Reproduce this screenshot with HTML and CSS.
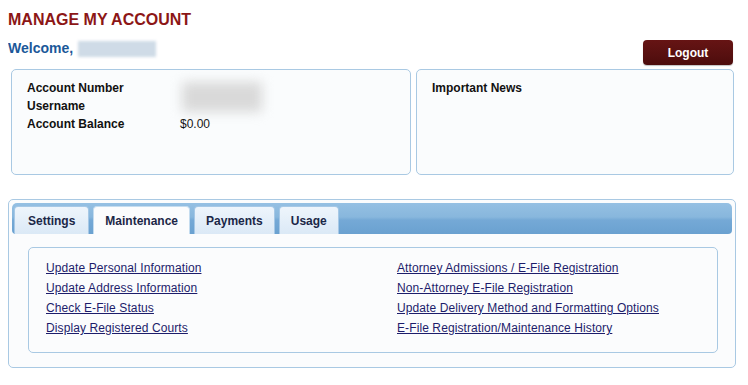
FILE: index.html
```html
<!DOCTYPE html>
<html lang="en">
<head>
  <meta charset="UTF-8">
  <meta name="viewport" content="width=device-width, initial-scale=1.0">
  <title>Manage My Account</title>
  <link rel="stylesheet" href="styles.css">
</head>
<body>
  <main class="page">
    <h1 class="title">MANAGE MY ACCOUNT</h1>
    <div class="top-bar">
      <div class="welcome">Welcome, <span class="name-blur"></span></div>
      <button class="logout">Logout</button>
    </div>
    <div class="panels">
      <section class="panel account">
        <div class="info">
          <div class="label">Account Number</div>
          <div class="value-blur"><span></span></div>
          <div class="label">Username</div>
          <div class="label">Account Balance</div>
          <div class="value">$0.00</div>
        </div>
      </section>
      <section class="panel news">
        <div class="label">Important News</div>
      </section>
    </div>
    <div class="tab-box">
      <nav class="tab-bar">
        <a class="tab">Settings</a>
        <a class="tab active">Maintenance</a>
        <a class="tab">Payments</a>
        <a class="tab">Usage</a>
      </nav>
      <div class="tab-content">
        <div class="links">
          <a href="#">Update Personal Information</a>
          <a href="#">Attorney Admissions / E-File Registration</a>
          <a href="#">Update Address Information</a>
          <a href="#">Non-Attorney E-File Registration</a>
          <a href="#">Check E-File Status</a>
          <a href="#">Update Delivery Method and Formatting Options</a>
          <a href="#">Display Registered Courts</a>
          <a href="#">E-File Registration/Maintenance History</a>
        </div>
      </div>
    </div>
  </main>
</body>
</html>
```

FILE: styles.css
```css
body {
  margin: 8px;
  background-color: #fff;
  font-family: "Liberation Sans", Arial, sans-serif;
  color: #111;
}

.page {
  width: 728px;
}

.title {
  margin: 0;
  padding-top: 2px;
  font-size: 16px;
  line-height: 20px;
  color: #8c1616;
}

.top-bar {
  display: flex;
  justify-content: space-between;
  align-items: flex-start;
  margin-top: 9px;
}

.welcome {
  font-size: 14px;
  font-weight: bold;
  line-height: 18px;
  color: #1b5899;
}

.name-blur {
  display: inline-block;
  width: 78px;
  height: 16px;
  margin-left: 1px;
  vertical-align: -4px;
  background-color: #cfdbe7;
  filter: blur(1.5px);
}

.logout {
  margin: 1px 3px 0 0;
  width: 90px;
  height: 25px;
  padding: 0;
  border: none;
  border-radius: 4px;
  background: linear-gradient(#661414, #571010 60%, #4c0c0c);
  box-shadow: 0 1px 1px rgba(0, 0, 0, 0.25);
  color: #fff;
  font-family: inherit;
  font-size: 12px;
  font-weight: bold;
}

.panels {
  display: flex;
  gap: 5px;
  margin: 4px 2px 0 3px;
}

.panel {
  height: 106px;
  box-sizing: border-box;
  padding: 9px 15px;
  border: 1px solid #a9c9e3;
  border-radius: 5px;
  background-color: #fafcfd;
}

.account {
  width: 400px;
}

.news {
  flex: 1;
}

.label {
  font-size: 12px;
  font-weight: bold;
  line-height: 18px;
}

.info {
  display: grid;
  grid-template-columns: 153px 1fr;
}

.value {
  font-size: 12px;
  line-height: 18px;
}

.value-blur {
  grid-row: span 2;
}

.value-blur span {
  display: block;
  width: 80px;
  height: 30px;
  margin: 3px 0 0 2px;
  background-color: #d9d9d9;
  filter: blur(6px);
}

.tab-box {
  margin-top: 24px;
  border: 1px solid #a9c9e3;
  border-radius: 5px;
  background-color: #fbfcfd;
}

.tab-bar {
  display: flex;
  gap: 4px;
  height: 31px;
  box-sizing: border-box;
  margin: 3px 3px 0;
  padding: 3px 2px 0;
  border-radius: 5px 5px 4px 4px;
  background: linear-gradient(#95c0e3, #88b7dd 45%, #75a9d6 55%, #6aa1d0);
}

.tab {
  padding: 0 11px;
  border: 1px solid #a6c8e6;
  border-bottom: none;
  border-radius: 4px 4px 0 0;
  background: linear-gradient(#eef5fc, #dbe9f6);
  font-size: 12px;
  font-weight: bold;
  line-height: 28px;
  color: #1b2747;
}

.tab:first-child {
  padding: 0 13px;
}

.tab.active {
  background: #fbfcfd;
  border-color: #c4dcef;
}

.tab-content {
  padding: 13px 17px 14px 19px;
}

.links {
  display: grid;
  grid-template-columns: 351px 1fr;
  padding: 10px 0 14px 17px;
  border: 1px solid #a9c9e3;
  border-radius: 5px;
  background-color: #fbfcfd;
}

.links a {
  font-size: 12px;
  line-height: 20px;
  letter-spacing: 0.1px;
  color: #1d1d6b;
  justify-self: start;
}
```
